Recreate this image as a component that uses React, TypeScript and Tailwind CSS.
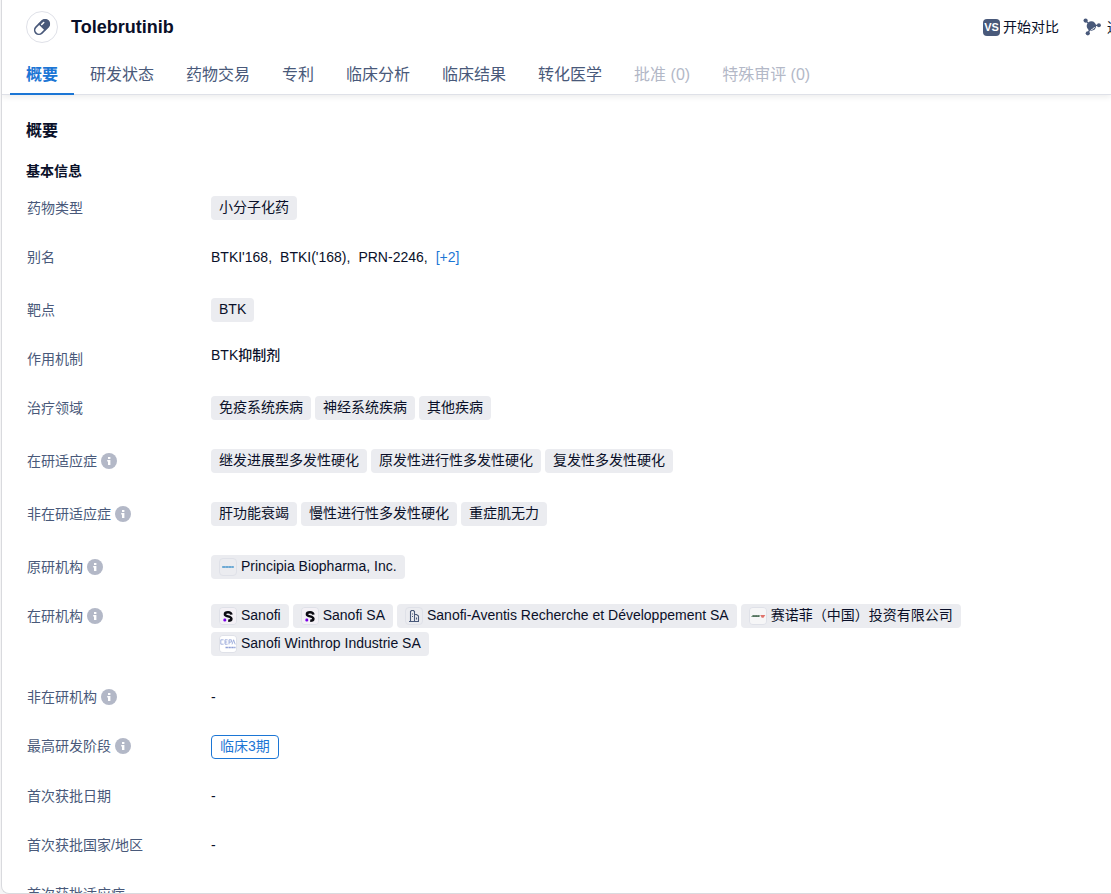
import type { ReactNode } from 'react'

interface Tab {
    label: string
    state?: 'active' | 'disabled'
}

interface Org {
    name: string
    logo: ReactNode
}

const tabs: Tab[] = [
    { label: '概要', state: 'active' },
    { label: '研发状态' },
    { label: '药物交易' },
    { label: '专利' },
    { label: '临床分析' },
    { label: '临床结果' },
    { label: '转化医学' },
    { label: '批准 (0)', state: 'disabled' },
    { label: '特殊审评 (0)', state: 'disabled' },
]

function PillIcon() {
    return (
        <svg viewBox="0 0 18 18" className="h-[18px] w-[18px]" aria-hidden="true">
            <g transform="rotate(-45 9 9)">
                <rect x="0.4" y="4.8" width="17.2" height="8.4" rx="4.2" fill="#fff" stroke="#49597a" strokeWidth="1.6" />
                <path d="M8.4 4.2h4.8a4.8 4.8 0 0 1 0 9.6H8.4z" fill="#49597a" />
                <path d="M10.6 7h2.8" stroke="#fff" strokeWidth="1.6" strokeLinecap="round" />
            </g>
        </svg>
    )
}

function VsIcon() {
    return (
        <span className="flex h-[17px] w-[17px] items-center justify-center rounded-sm bg-[#49597a] font-['Liberation_Sans',sans-serif] text-[11px] leading-none font-bold text-white">
            VS
        </span>
    )
}

function MoleculeIcon() {
    return (
        <svg viewBox="0 0 18 18" className="h-[18px] w-[18px]" fill="#49597a" aria-hidden="true">
            <path d="M2.6 2.8l5 4.4M16 7.4h-6M4.8 15.4l2.6-5" stroke="#49597a" strokeWidth="1.3" />
            <circle cx="2.6" cy="2.6" r="2.1" />
            <circle cx="15.9" cy="7.2" r="2" />
            <circle cx="4.8" cy="15.3" r="2.1" />
            <circle cx="8.4" cy="8" r="4.7" />
            <path d="M11.6 9a4 4 0 0 1-3.4 2.6" stroke="#fff" strokeWidth="0.9" fill="none" />
        </svg>
    )
}

function InfoIcon() {
    return (
        <svg viewBox="0 0 16 16" className="h-4 w-4" aria-hidden="true">
            <circle cx="8" cy="8" r="8" fill="#b3b8c7" />
            <rect x="7" y="4" width="2.4" height="2" fill="#fff" />
            <path d="M6.2 7h3.2v5H7V8.6h-.8z" fill="#fff" />
        </svg>
    )
}

function SanofiLogo() {
    return (
        <svg viewBox="0 0 16 16" className="h-4 w-4" aria-hidden="true">
            <rect width="16" height="16" fill="#f4f1f6" />
            <path
                d="M11.4 6.6C11.2 4.9 10 4.2 8 4.2c-1.8 0-3.1.7-3.1 2 0 3 6.5 1.3 6.5 4.6 0 1.4-1.2 2-3.2 2"
                stroke="#0b0b12"
                strokeWidth="2.5"
                fill="none"
            />
            <rect x="3.4" y="10.6" width="2.8" height="2.8" rx="1.2" fill="#7a00e6" />
        </svg>
    )
}

function BuildingIcon() {
    return (
        <svg viewBox="0 0 16 16" className="h-4 w-4" fill="none" stroke="#49597a" strokeWidth="1.1" aria-hidden="true">
            <path d="M4.5 13.5V3.5l1-1h2l1 1v10M8.5 6.5h2l2 1.5v5.5M3 13.5h10M6 6h1M6 8.5h1M10.5 9.5v2" />
        </svg>
    )
}

function PrincipiaLogo() {
    return (
        <svg viewBox="0 0 16 16" className="h-4 w-4" aria-hidden="true">
            <path d="M2 8h12" stroke="#9cc4e0" strokeWidth="1.8" />
            <path d="M2.5 8h11" stroke="#3f8fc8" strokeWidth="1" strokeDasharray="2.6 .5" />
        </svg>
    )
}

function ChinaLogo() {
    return (
        <svg viewBox="0 0 16 16" className="h-4 w-4" aria-hidden="true">
            <rect width="16" height="16" fill="#f6f6f7" />
            <path d="M1 9l1.4-1.8h8L9.4 9z" fill="#6f8f78" />
            <path d="M3 8h6" stroke="#35513f" strokeWidth="1" strokeDasharray="1.8 .4" />
            <path d="M10.3 7h5l-1.8 2.8h-1.8z" fill="#e0736c" />
        </svg>
    )
}

function WinthropLogo() {
    return (
        <svg viewBox="0 0 16 16" className="h-4 w-4" aria-hidden="true">
            <rect width="16" height="16" fill="#fff" />
            <path
                d="M3.6 3.8H.8v4.4h2.8M7.6 3.8H5v4.4h2.6M5 6h2.2M9 8.4V3.8h2.4v2.3H9M12 8.4l1.6-4.6 1.6 4.6"
                stroke="#8e9fd6"
                strokeWidth=".8"
                fill="none"
            />
            <path d="M5.5 11.5h10" stroke="#8e9fd6" strokeWidth="1.4" strokeDasharray="2.4 .5" />
        </svg>
    )
}

function Chip({ children }: { children: ReactNode }) {
    return <span className="flex h-6 items-center rounded bg-[#ebecf0] px-2 pb-0.5 text-[#0a1029]">{children}</span>
}

function Chips({ items }: { items: string[] }) {
    return (
        <div className="flex flex-wrap gap-1 pb-1">
            {items.map((item) => (
                <Chip key={item}>{item}</Chip>
            ))}
        </div>
    )
}

function OrgChips({ orgs }: { orgs: Org[] }) {
    return (
        <div className="flex flex-wrap gap-1">
            {orgs.map(({ name, logo }) => (
                <a key={name} href="#" className="flex h-6 items-center rounded bg-[#ebecf0] px-2 text-[#0a1029]">
                    <span className="mr-1 flex h-[18px] w-[18px] items-center justify-center overflow-hidden rounded border border-[#dfe1e8]">
                        {logo}
                    </span>
                    <span className="pb-0.5">{name}</span>
                </a>
            ))}
        </div>
    )
}

function Row({ label, info, children }: { label: string; info?: boolean; children: ReactNode }) {
    return (
        <div className="flex items-start">
            <dt className="flex w-[185px] shrink-0 items-center gap-1 pl-px leading-6 text-[#49597a]">
                {label}
                {info && <InfoIcon />}
            </dt>
            <dd className="min-w-0 flex-1 leading-6">{children}</dd>
        </div>
    )
}

const developers: Org[] = [
    { name: 'Sanofi', logo: <SanofiLogo /> },
    { name: 'Sanofi SA', logo: <SanofiLogo /> },
    { name: 'Sanofi-Aventis Recherche et Développement SA', logo: <BuildingIcon /> },
    { name: '赛诺菲（中国）投资有限公司', logo: <ChinaLogo /> },
    { name: 'Sanofi Winthrop Industrie SA', logo: <WinthropLogo /> },
]

export default function App() {
    return (
        <div className="flex h-screen flex-col bg-[#f5f5f6] pl-px font-['Liberation_Sans','Noto_Sans_CJK_SC',sans-serif] text-sm text-[#0a1029]">
            <div className="flex min-h-0 flex-1 flex-col overflow-hidden rounded-bl-lg border-b border-l border-[#d9dade] bg-white">
                <header className="relative shrink-0 border-b border-[#dfe1e8] shadow-[0_2px_6px_rgba(0,0,0,0.08)]">
                    <div className="flex h-[54px] items-center overflow-hidden pl-6">
                        <span className="flex h-8 w-8 shrink-0 items-center justify-center rounded-full border border-[#dfe1e8]">
                            <PillIcon />
                        </span>
                        <h1 className="ml-[13px] text-lg font-bold">Tolebrutinib</h1>
                        <div className="ml-auto flex w-32 shrink-0 gap-6 whitespace-nowrap">
                            <button type="button" className="flex shrink-0 items-center gap-[3px]">
                                <VsIcon />
                                开始对比
                            </button>
                            <button type="button" className="flex shrink-0 items-center gap-1.5">
                                <MoleculeIcon />
                                通过结构搜索
                            </button>
                        </div>
                    </div>
                    <nav className="-mb-px flex pl-2 text-base leading-6">
                        {tabs.map(({ label, state }) => (
                            <button
                                key={label}
                                type="button"
                                disabled={state === 'disabled'}
                                className={
                                    state === 'active'
                                        ? 'border-b-2 border-[#1c76d5] px-4 pt-[9px] pb-1.5 font-bold text-[#1c76d5]'
                                        : state === 'disabled'
                                          ? 'border-b-2 border-transparent px-4 pt-[9px] pb-1.5 text-[#b3b8c7]'
                                          : 'border-b-2 border-transparent px-4 pt-[9px] pb-1.5 text-[#49597a]'
                                }
                            >
                                {label}
                            </button>
                        ))}
                    </nav>
                </header>

                <main className="min-h-0 flex-1 overflow-hidden px-6 pt-6">
                    <h2 className="text-base leading-6 font-bold">概要</h2>
                    <h3 className="mt-4 leading-6 font-bold">基本信息</h3>
                    <dl className="mt-[13px] flex flex-col gap-[25px]">
                        <Row label="药物类型">
                            <div className="flex">
                                <Chip>小分子化药</Chip>
                            </div>
                        </Row>
                        <Row label="别名">
                            <div className="flex gap-2 pb-1">
                                <span>BTKI'168,</span>
                                <span>BTKI('168),</span>
                                <span>PRN-2246,</span>
                                <button type="button" className="text-[#1c76d5]">
                                    [+2]
                                </button>
                            </div>
                        </Row>
                        <Row label="靶点">
                            <div className="flex">
                                <Chip>BTK</Chip>
                            </div>
                        </Row>
                        <Row label="作用机制">
                            <p className="leading-4 font-medium">BTK抑制剂</p>
                        </Row>
                        <Row label="治疗领域">
                            <Chips items={['免疫系统疾病', '神经系统疾病', '其他疾病']} />
                        </Row>
                        <Row label="在研适应症" info>
                            <Chips items={['继发进展型多发性硬化', '原发性进行性多发性硬化', '复发性多发性硬化']} />
                        </Row>
                        <Row label="非在研适应症" info>
                            <Chips items={['肝功能衰竭', '慢性进行性多发性硬化', '重症肌无力']} />
                        </Row>
                        <Row label="原研机构" info>
                            <OrgChips orgs={[{ name: 'Principia Biopharma, Inc.', logo: <PrincipiaLogo /> }]} />
                        </Row>
                        <Row label="在研机构" info>
                            <div className="pb-1">
                                <OrgChips orgs={developers} />
                            </div>
                        </Row>
                        <Row label="非在研机构" info>
                            -
                        </Row>
                        <Row label="最高研发阶段" info>
                            <div className="flex pt-px">
                                <span className="flex h-6 items-center rounded border border-[#1c76d5] px-2 pb-0.5 text-[#1c76d5]">
                                    临床3期
                                </span>
                            </div>
                        </Row>
                        <Row label="首次获批日期">-</Row>
                        <Row label="首次获批国家/地区">-</Row>
                        <Row label="首次获批适应症">-</Row>
                    </dl>
                </main>
            </div>
        </div>
    )
}
